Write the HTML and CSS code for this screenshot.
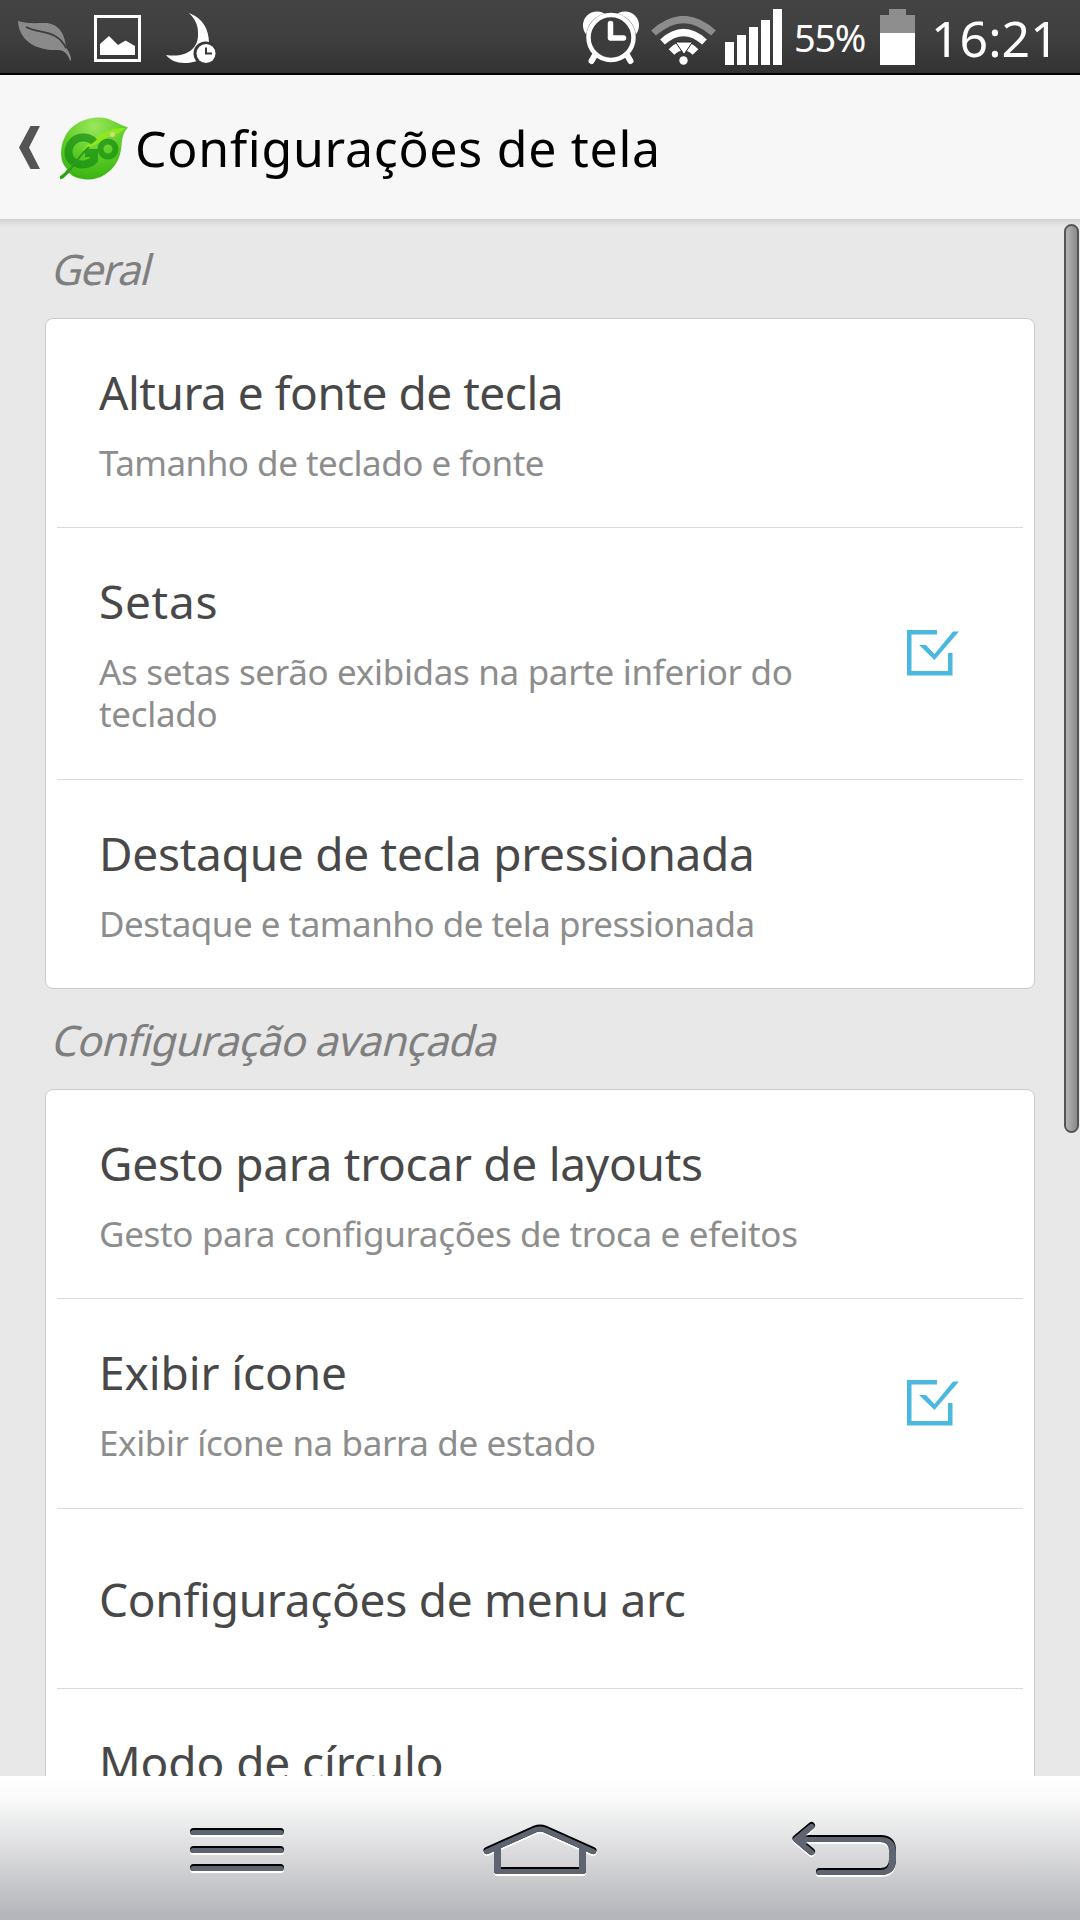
FILE: index.html
```html
<!DOCTYPE html>
<html lang="pt-BR">
<head>
<meta charset="utf-8">
<title>Configurações de tela</title>
<link rel="stylesheet" href="styles.css">
</head>
<body>
<div class="screen">
  <div class="status">
    <svg class="leaf" width="54" height="42" viewBox="0 0 54 42"><path fill="#8a8a8a" d="M0 0C9 3 18 2 27 2c12 0 20 9 21 25 3 3 5 8 5 12l-1 1c-2-7-6-11-12-11C20 30 1 21 0 0z"/><path fill="none" stroke="#3d3d3d" stroke-width="1.8" d="M8 6c13 7 31 2 40 21"/></svg>
    <svg class="photo" width="47" height="47" viewBox="0 0 47 47"><path fill="none" stroke="#fff" stroke-width="3" d="M1.500 1.500h44v44h-44z"/><path fill="#fff" d="M6 40V29l9-8 9 9 7.500-4.500L41 31v9z"/></svg>
    <svg class="moon" width="50" height="52" viewBox="0 0 50 52"><path fill="#fff" d="M23 0c14 5 20 17 20 30 0 14-11 20-24 20C10 50 4 47 0 42c20 3 33-6 32-22 0-8-3-14-9-20z"/><circle cx="39.500" cy="40.500" r="12" fill="#383838"/><circle cx="40" cy="40.500" r="9.500" fill="#fff"/><path fill="none" stroke="#383838" stroke-width="2" d="M40 34.500v6h6"/></svg>
    <div class="status-right">
      <svg class="alarm" width="56" height="54" viewBox="0 0 56 54"><g fill="#fff"><circle cx="14" cy="14.500" r="14"/><circle cx="42" cy="14.500" r="14"/></g><circle cx="28" cy="26.500" r="25" fill="#3e3e3e"/><path stroke="#fff" stroke-width="6" stroke-linecap="round" d="M12 44l-3.500 6M44 44l3.500 6"/><circle cx="28" cy="26.500" r="22.500" fill="#3c3c3c" stroke="#fff" stroke-width="4.500"/><path fill="none" stroke="#fff" stroke-width="5.500" stroke-linecap="round" stroke-linejoin="round" d="M27.500 12.500v14.500h13"/></svg>
      <svg class="wifi" width="66" height="50" viewBox="0 0 66 50"><g fill="none" stroke="#fff" stroke-width="7"><path stroke="#8c8c8c" d="M2.500 17Q32.500-10 62.500 17"/><path d="M11.500 26Q32.500 7 53.500 26"/><path d="M20.500 36Q32.500 24 44.500 36" stroke-width="8"/></g><circle cx="32.500" cy="44.500" r="4.200" fill="#fff"/><path fill="#fff" stroke="#222" stroke-width="1" d="M24.500 26h17L33 38.500z"/></svg>
      <svg class="bars" width="57" height="56" viewBox="0 0 57 56"><path fill="#fff" d="M0 33h9v23H0zM12 26h9v30h-9zM24 18h9v38h-9zM36 11h9v45h-9zM48 0h9v56h-9z"/></svg>
      <span class="percent">55%</span>
      <svg class="battery" width="35" height="56" viewBox="0 0 35 56"><path fill="#8e8e8e" d="M9 0h17v6h9v18H0V6h9z"/><path fill="#fff" d="M0 24h35v32H0z"/></svg>
      <span class="clock">16:21</span>
    </div>
  </div>

  <div class="header">
    <svg class="back" width="21" height="43" viewBox="0 0 21 43"><path fill="#555" d="M11.500 0H21L10 21.500 21 43H11.500L0 21.500z"/></svg>
    <svg class="logo" width="69" height="64" viewBox="0 0 69 64">
      <defs><radialGradient id="lg" cx=".5" cy=".15" r=".9"><stop offset="0" stop-color="#9be65c"/><stop offset=".5" stop-color="#5fce28"/><stop offset="1" stop-color="#35b010"/></radialGradient></defs>
      <path fill="url(#lg)" d="M40 .500C50 .500 57 7 68 10.500 59 19 64 31 58 43 51 57 38 63 27 62.500 19 62 13 60 9.500 56 7 57 4 62 0 62.500V59C4 57 6 54 7 52 1 46 0 37 2 28 6 11 20 .500 40 .500z"/>
      <path fill="#8ee820" d="M66 11C48 10 34 19 22 34c12-4 22-14 35-17 3-1 5-3 9-6z"/>
      <g fill="none" stroke="#168c12" stroke-opacity=".7"><path stroke-width="8" d="M34 25C29 19 18 19 12.500 25c-6 7-5 16 1 20 6 4 16 3 20.500-2v-7h-9"/><circle cx="48" cy="32" r="7.500" stroke-width="6"/></g>
      <path fill="none" stroke="#2c9a1c" stroke-width="1.800" d="M1 61C13 53 17 40 29 30"/>
      <circle cx="52.500" cy="17.500" r="2.500" fill="#d9d77a"/>
    </svg>
    <h1 class="title">Configurações de tela</h1>
  </div>

  <div class="content">
    <h2 class="section"><span class="slant short">Geral</span></h2>
    <div class="card">
      <div class="row"><div class="texts"><div class="name tight">Altura e fonte de tecla</div><div class="summary snug">Tamanho de teclado e fonte</div></div></div>
      <div class="row two-line"><div class="texts"><div class="name wide">Setas</div><div class="summary loose">As setas serão exibidas na parte inferior do teclado</div></div>
        <svg class="check" width="52" height="46" viewBox="0 0 52 46"><path fill="#4bb8e0" d="M0 0h30v4.500H4.500V41H41V23h4.500v22.500H0z"/><path fill="#4bb8e0" d="M12 15h7l8.500 9L46 1.500h6L27.500 30z"/></svg></div>
      <div class="row"><div class="texts"><div class="name close">Destaque de tecla pressionada</div><div class="summary snug">Destaque e tamanho de tela pressionada</div></div></div>
    </div>
    <h2 class="section"><span class="slant">Configuração avançada</span></h2>
    <div class="card">
      <div class="row"><div class="texts"><div class="name close">Gesto para trocar de layouts</div><div class="summary loose">Gesto para configurações de troca e efeitos</div></div></div>
      <div class="row tall"><div class="texts"><div class="name">Exibir ícone</div><div class="summary">Exibir ícone na barra de estado</div></div>
        <svg class="check" width="52" height="46" viewBox="0 0 52 46"><path fill="#4bb8e0" d="M0 0h30v4.500H4.500V41H41V23h4.500v22.500H0z"/><path fill="#4bb8e0" d="M12 15h7l8.500 9L46 1.500h6L27.500 30z"/></svg></div>
      <div class="row single"><div class="texts"><div class="name close">Configurações de menu arc</div></div></div>
      <div class="row"><div class="texts"><div class="name">Modo de círculo</div></div></div>
    </div>
    <div class="scrollbar"></div>
  </div>

  <div class="nav">
    <svg width="1080" height="144" viewBox="0 0 1080 144">
      <defs>
        <g id="keys" fill="none" stroke-width="7" stroke-linecap="round" stroke-linejoin="round">
          <path d="M193.500 55.500h87M193.500 73.500h87M193.500 91.500h87"/>
          <path d="M487 74.500L535 53q5-2 10 0l48 21.500M497.500 73v21.500h85V73"/>
          <path d="M811.500 49.500L796 62.500l15.500 13M799 62.500h81.500q12 0 12 12v9q0 12-12 12h-61"/>
        </g>
        <mask id="shape" maskUnits="userSpaceOnUse" x="0" y="0" width="1080" height="144"><use href="#keys" stroke="#fff"/></mask>
      </defs>
      <use href="#keys" y="2" stroke="#fff"/>
      <use href="#keys" stroke="#000"/>
      <g mask="url(#shape)"><use href="#keys" y="2" stroke="#5f6471"/></g>
    </svg>
  </div>
</div>
</body>
</html>
```
FILE: styles.css
```css
* { box-sizing: border-box; }

body {
  margin: 0;
  font-family: "Noto Sans", "Open Sans", sans-serif;
}

svg { display: block; flex: none; }

.screen {
  width: 1080px;
  height: 1920px;
  display: flex;
  flex-direction: column;
  overflow: hidden;
  background: #e8e8e8;
}

/* Status bar */
.status {
  flex: none;
  height: 75px;
  display: flex;
  align-items: flex-start;
  padding-left: 18px;
  background: linear-gradient(#434343, #404040 45%, #333);
  border-bottom: 2px solid #000;
  color: #fff;
}

.leaf { margin-top: 21px; }
.photo { margin: 15px 0 0 22px; }
.moon { margin: 13px 0 0 25px; }

.status-right {
  margin-left: auto;
  display: flex;
  align-items: flex-start;
  padding-right: 27px;
}

.alarm { margin-top: 11px; }
.wifi { margin: 16px 0 0 12px; }
.bars { margin: 9px 0 0 8px; }

.percent {
  width: 98px;
  padding-left: 12px;
  font-size: 38px;
  line-height: 75px;
  letter-spacing: -1.3px;
}

.battery { margin-top: 9px; }

.clock {
  width: 138px;
  padding-left: 16px;
  font-size: 50px;
  line-height: 76px;
  white-space: nowrap;
}

/* Action bar */
.header {
  flex: none;
  height: 144px;
  display: flex;
  align-items: flex-start;
  padding-left: 19px;
  background: #f7f7f7;
}

.back { margin-top: 51px; }
.logo { margin: 42px 0 0 20px; }

.title {
  margin: 0 0 0 6px;
  font-size: 50px;
  font-weight: 400;
  line-height: 146px;
  letter-spacing: .72px;
  color: #000;
}

/* Settings list */
.content {
  flex: 1;
  min-height: 0;
  position: relative;
  overflow: hidden;
  padding: 0 45px;
  background: linear-gradient(#cfcfcf, #dedede 4px, #e8e8e8 9px);
}

.section {
  margin: 0;
  padding-left: 9px;
  font-size: 42px;
  font-weight: 400;
  height: 99px;
  line-height: 99px;
  color: #7f7f7f;
}

.slant {
  display: inline-block;
  transform: skewX(-14deg);
  letter-spacing: -.85px;
}

.slant.short { letter-spacing: -1.4px; }

.card + .section { height: 100px; line-height: 102px; }

.card {
  padding: 0 11px;
  background: #fff;
  border: 1px solid #cbcbcb;
  border-radius: 8px;
}

.row {
  height: 209px;
  display: flex;
  align-items: flex-start;
  justify-content: space-between;
  padding: 43px 64px 0 42px;
  border-bottom: 1px solid #d9d9d9;
}

.row:last-child { height: 208px; border-bottom: 0; }
.row.two-line { height: 252px; }
.row.tall { height: 210px; }
.row.single { height: 180px; padding-top: 60px; }

.check { align-self: center; margin-top: -44px; }

.texts { width: 720px; }

.name {
  font-size: 46px;
  line-height: 60px;
  letter-spacing: -.1px;
  color: #484848;
}

.summary {
  margin-top: 20px;
  font-size: 35px;
  line-height: 42px;
  letter-spacing: -.4px;
  color: #8d8d8d;
}

.name.tight { letter-spacing: -.48px; }
.name.close { letter-spacing: -.27px; }
.name.wide { letter-spacing: .7px; }
.summary.snug { letter-spacing: -.51px; }
.summary.loose { letter-spacing: -.33px; }

.scrollbar {
  position: absolute;
  top: 5px;
  right: 1px;
  width: 15px;
  height: 909px;
  border: 2px solid #555;
  border-radius: 8px;
  background: linear-gradient(90deg, #b4b4b4, #8a8a8a);
}

/* Navigation keys */
.nav {
  flex: none;
  height: 144px;
  background: linear-gradient(#fff, #fbfbfb 14%, #e5e6e7 40%, #dcdcde 52%, #b4b6bb 96%);
}
```
